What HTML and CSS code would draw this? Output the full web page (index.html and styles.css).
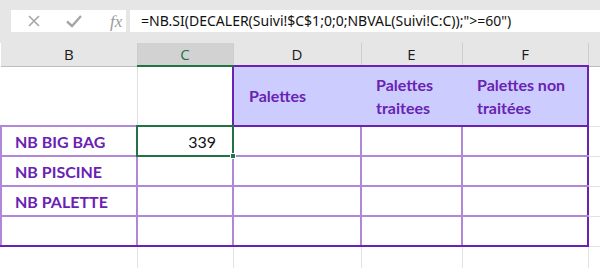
FILE: index.html
```html
<!DOCTYPE html>
<html>
<head>
<meta charset="utf-8">
<link rel="stylesheet" href="styles.css">
</head>
<body>
<div class="bar">
  <div class="tools">
    <svg class="ic" width="16" height="16" viewBox="0 0 16 16"><path d="M3 3 L13 13 M13 3 L3 13" stroke="#a6a6a6" stroke-width="1.6" fill="none"/></svg>
    <svg class="ic" width="18" height="16" viewBox="0 0 18 16"><path d="M2 8.5 L7 13 L16 3" stroke="#a6a6a6" stroke-width="2.4" fill="none"/></svg>
    <span class="fx">fx</span>
  </div>
  <div class="formula">=NB.SI(DECALER(Suivi!$C$1;0;0;NBVAL(Suivi!C:C));"&gt;=60")</div>
</div>
<table class="sheet">
  <colgroup>
    <col class="cb"><col class="cc"><col class="cd"><col class="ce"><col class="cf"><col class="cg">
  </colgroup>
  <thead>
    <tr class="hdr">
      <th>B</th><th class="sel">C</th><th>D</th><th>E</th><th>F</th><th class="last"></th>
    </tr>
  </thead>
  <tbody>
    <tr class="r1">
      <td class="blank"></td><td class="blank c"></td>
      <td class="ph pd">Palettes</td><td class="ph">Palettes<br>traitees</td><td class="ph pf">Palettes non<br>traitées</td><td class="out"></td>
    </tr>
    <tr class="r">
      <td class="lbl">NB BIG BAG</td><td class="num active">339<span class="handle"></span></td><td></td><td></td><td class="pf"></td><td class="out"></td>
    </tr>
    <tr class="r">
      <td class="lbl">NB PISCINE</td><td></td><td></td><td></td><td class="pf"></td><td class="out"></td>
    </tr>
    <tr class="r">
      <td class="lbl">NB PALETTE</td><td></td><td></td><td></td><td class="pf"></td><td class="out"></td>
    </tr>
    <tr class="r lastrow">
      <td class="lbl"></td><td></td><td></td><td></td><td class="pf"></td><td class="out"></td>
    </tr>
    <tr class="empty">
      <td></td><td></td><td></td><td></td><td></td><td class="out"></td>
    </tr>
  </tbody>
</table>
</body>
</html>
```
FILE: styles.css
```css
* { box-sizing: border-box; }
html, body { margin: 0; padding: 0; background: #fff; }
body { width: 600px; height: 268px; overflow: hidden; font-family: "Open Sans", sans-serif; }

.bar {
  height: 43px;
  background: #e6e6e6;
  display: flex;
  align-items: flex-start;
  padding-top: 10px;
  padding-left: 11px;
  gap: 4px;
}
.tools {
  width: 115px;
  height: 22px;
  background: #fff;
  display: flex;
  align-items: center;
  padding-left: 15px;
  gap: 23px;
}
.ic { display: block; }
.tools .fx {
  font-family: "Liberation Serif", serif;
  font-style: italic;
  font-size: 17px;
  color: #9a9a9a;
  margin-left: 4px;
  line-height: 1;
}
.formula {
  flex: 1;
  height: 22px;
  background: #fff;
  font-family: "Noto Sans", sans-serif;
  font-size: 14px;
  line-height: 22px;
  padding-left: 11px;
  color: #111;
  white-space: nowrap;
}

.sheet {
  border-collapse: collapse;
  table-layout: fixed;
  width: 600px;
}
.cb { width: 136px; }
.cc { width: 96px; }
.cd { width: 128px; }
.ce { width: 101px; }
.cf { width: 126px; }
.cg { width: 13px; }

.hdr th {
  height: 23px;
  background: #e6e6e6;
  font-weight: normal;
  font-family: "Open Sans", sans-serif;
  font-size: 15px;
  color: #1a1a1a;
  padding: 0;
  border-left: 1px solid #cdcdcd;
  border-bottom: 1px solid #bcbcbc;
  line-height: 22px;
}
.hdr th:first-child { border-left: none; }
.hdr th.sel {
  background: #d2d2d2;
  color: #217346;
  border-bottom: 2px solid #217346;
}

td { padding: 0; }
.r1 td { height: 60px; }
.r td { height: 30px; border: 2px solid #b187d9; }
.empty td { height: 22px; border-left: 1px solid #e2e2e2; }
.empty td:first-child { border-left: none; }

.blank { border-right: 1px solid #e0e0e0; }
.blank.c { border-right: none; }

.ph {
  background: #ccccff;
  color: #6a22b2;
  font-family: "Lato", sans-serif;
  font-weight: bold;
  font-size: 16px;
  line-height: 23px;
  vertical-align: middle;
  padding-left: 15px;
  padding-bottom: 1px;
  border-top: 2px solid #6a22b2;
  border-bottom: 2px solid #6a22b2;
}
.pd { border-left: 2px solid #6a22b2; }
.pf { border-right: 2px solid #6a22b2 !important; }

.lbl {
  color: #6a22b2;
  font-family: "Lato", sans-serif;
  font-weight: bold;
  font-size: 16px;
  padding-left: 13px;
  padding-top: 1px;
}
.r td:first-child { border-left: 2px solid #b187d9; }
.lastrow td { border-bottom: 2px solid #6a22b2; }

.num {
  font-family: "Lato", sans-serif;
  font-size: 16px;
  text-align: right;
  padding-right: 16px;
  color: #111;
}
.active {
  position: relative;
  outline: 2px solid #217346;
  outline-offset: -1px;
}
.handle {
  position: absolute;
  right: -4px;
  bottom: -4px;
  width: 6px;
  height: 6px;
  background: #217346;
  border: 1px solid #fff;
}
.out { border-top: 1px solid #e2e2e2 !important; border-bottom: 1px solid #e2e2e2 !important; border-right: none !important; }
.r td.out { border-left-color: #6a22b2; }
.r1 td.out { border-left: 2px solid #6a22b2; }
```
